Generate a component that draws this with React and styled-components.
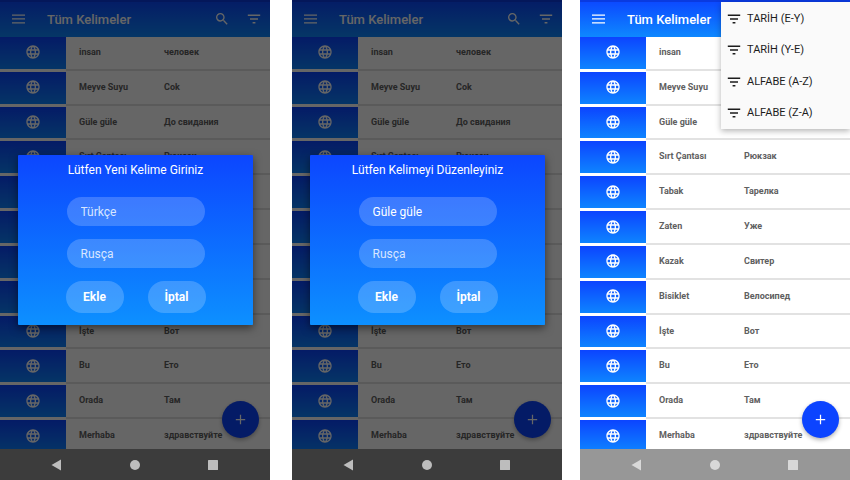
import React from "react";
import styled, { createGlobalStyle } from "styled-components";

const GlobalStyle = createGlobalStyle`
  *, *::before, *::after { box-sizing: border-box; }
  body {
    margin: 0;
    background: #fff;
    font-family: Roboto, "Noto Sans", sans-serif;
  }
`;

const Gallery = styled.main`
  display: flex;
  min-height: 100vh;
`;

const Phone = styled.section`
  position: relative;
  flex: 1;
  min-width: 0;
  display: flex;
  flex-direction: column;
  overflow: hidden;
  background: #fff;
  margin-left: ${(p) => p.$gap || 0}px;
`;

const AppBar = styled.header`
  display: flex;
  align-items: center;
  height: 37px;
  padding: 0 9px 2px 11px;
  border-top: 2px solid #0a3ae0;
  color: #fff;
  background: linear-gradient(#0c4aff, #0e88ff);
`;

const IconButton = styled.button`
  display: flex;
  margin: 0 0 0 ${(p) => p.$gap || 0}px;
  padding: 0;
  border: 0;
  color: inherit;
  background: none;
`;

const Title = styled.h1`
  flex: 1;
  margin: 0;
  padding: 2px 0 0 22px;
  font-size: 13px;
  line-height: 18px;
  font-weight: 500;
  white-space: nowrap;
`;

const ListArea = styled.div`
  flex: 1;
  display: flex;
  min-height: 0;
  overflow: hidden;
`;

const WordList = styled.ul`
  flex: 1;
  display: grid;
  grid-auto-rows: minmax(32px, 1fr);
  margin: 0 0 -6px;
  padding: 0;
  list-style: none;
`;

const WordRow = styled.li`
  display: grid;
  grid-template-columns: 66px 1fr;
  padding-bottom: 3px;
`;

const Tile = styled.div`
  display: grid;
  place-items: center;
  padding-bottom: 1px;
  color: #fff;
  background: linear-gradient(#0c44ff, #0e84ff);
`;

const Words = styled.div`
  display: grid;
  grid-template-columns: 85px 1fr;
  align-items: center;
  padding: 0 0 2px 13px;
  font-size: 9px;
  line-height: 12px;
  font-weight: 700;
  color: #606060;
  white-space: nowrap;
  background: #fff;
  box-shadow: 0 2px 0 #e2e2e2;
`;

const AddButton = styled.button`
  position: absolute;
  right: 11px;
  bottom: 42px;
  display: grid;
  place-items: center;
  width: 37px;
  height: 37px;
  padding: 0;
  border: 0;
  border-radius: 50%;
  color: #fff;
  background: #0c44ff;
  box-shadow: 0 2px 4px rgba(0, 0, 0, 0.3);
`;

const NavBar = styled.nav`
  position: relative;
  z-index: 2;
  display: flex;
  justify-content: space-between;
  align-items: center;
  height: 31px;
  padding: 0 52px 0 51px;
  color: ${(p) => (p.$dim ? "#bdbdbd" : "#d8d8d8")};
  background: ${(p) => (p.$dim ? "#3c3c3c" : "#979797")};
`;

const Scrim = styled.div`
  position: absolute;
  inset: 0;
  z-index: 1;
  display: grid;
  place-items: center;
  padding: 0 17px 0 18px;
  background: rgba(0, 0, 0, 0.6);
`;

const Dialog = styled.form`
  display: flex;
  flex-direction: column;
  align-items: center;
  width: 100%;
  padding: 7px 0 12px;
  border-radius: 1px;
  color: #fff;
  background: linear-gradient(#0c46ff, #0d90ff);
  box-shadow: 0 3px 8px rgba(0, 0, 0, 0.5);
`;

const DialogTitle = styled.h2`
  margin: 0 0 19px;
  font-size: 12px;
  line-height: 16px;
  font-weight: 400;
`;

const Field = styled.input`
  width: 138px;
  height: 29px;
  margin: 0 0 13px;
  padding: 0 14px;
  border: 0;
  border-radius: 15px;
  font-family: inherit;
  font-size: 12px;
  color: inherit;
  background: rgba(255, 255, 255, 0.2);

  &::placeholder {
    color: #d8e6ff;
    opacity: 1;
  }
`;

const Actions = styled.div`
  display: flex;
  gap: 24px;
`;

const ActionButton = styled.button`
  width: 58px;
  height: 32px;
  padding: 0;
  border: 0;
  border-radius: 16px;
  font-family: inherit;
  font-size: 12px;
  font-weight: 700;
  color: inherit;
  background: rgba(255, 255, 255, 0.2);
`;

const SortMenu = styled.div`
  position: absolute;
  top: 2px;
  right: 0;
  z-index: 1;
  display: grid;
  grid-auto-rows: 1fr;
  width: 129px;
  height: 127px;
  padding-top: 1px;
  color: #1c1c1c;
  background: #fafafa;
  box-shadow: 0 2px 6px rgba(0, 0, 0, 0.3);
`;

const SortItem = styled.button`
  display: flex;
  align-items: center;
  gap: 6px;
  padding: 0 6px;
  border: 0;
  font-family: inherit;
  font-size: 11px;
  line-height: 16px;
  color: inherit;
  background: none;
  white-space: nowrap;
`;

const MenuIcon = () => (
  <svg width="14" height="14" viewBox="0 0 14 14" fill="currentColor" aria-hidden="true">
    <path d="M1 2.4h13v1.3H1zM1 6.3h13v1.3H1zM1 10.2h13v1.3H1z" />
  </svg>
);

const SearchIcon = () => (
  <svg width="16" height="16" viewBox="0 0 24 24" fill="currentColor" aria-hidden="true">
    <path d="M15.5 14h-.79l-.28-.27A6.47 6.47 0 0 0 16 9.5 6.5 6.5 0 1 0 9.5 16c1.61 0 3.09-.59 4.23-1.57l.27.28v.79l5 4.99L20.49 19l-4.99-5zm-6 0C7.01 14 5 11.99 5 9.5S7.01 5 9.5 5 14 7.01 14 9.5 11.99 14 9.5 14z" />
  </svg>
);

const SortIcon = () => (
  <svg width="14" height="14" viewBox="0 0 14 14" fill="currentColor" aria-hidden="true">
    <path d="M.8 2.5h12.4v1.6H.8zM3 6.200h8v1.600H3zM5.600 9.900h2.800v1.500H5.600z" />
  </svg>
);

const GlobeIcon = () => (
  <svg width="16" height="16" viewBox="0 0 24 24" fill="currentColor" aria-hidden="true">
    <path d="M11.99 2C6.47 2 2 6.48 2 12s4.47 10 9.99 10C17.52 22 22 17.52 22 12S17.52 2 11.99 2zm6.93 6h-2.95a15.65 15.65 0 0 0-1.38-3.56A8.03 8.03 0 0 1 18.92 8zM12 4.04c.83 1.2 1.48 2.53 1.91 3.96h-3.82c.43-1.43 1.08-2.76 1.91-3.96zM4.26 14C4.1 13.36 4 12.69 4 12s.1-1.36.26-2h3.38c-.08.66-.14 1.32-.14 2s.06 1.34.14 2H4.26zm.82 2h2.95c.32 1.25.78 2.45 1.38 3.56A7.99 7.99 0 0 1 5.08 16zm2.95-8H5.08a7.99 7.99 0 0 1 4.33-3.56A15.65 15.65 0 0 0 8.03 8zM12 19.96c-.83-1.2-1.48-2.53-1.91-3.96h3.82c-.43 1.43-1.08 2.76-1.91 3.96zM14.34 14H9.66c-.09-.66-.16-1.32-.16-2s.07-1.35.16-2h4.68c.09.65.16 1.32.16 2s-.07 1.34-.16 2zm.25 5.56c.6-1.11 1.06-2.31 1.38-3.56h2.95a8.03 8.03 0 0 1-4.33 3.56zM16.36 14c.08-.66.14-1.32.14-2s-.06-1.34-.14-2h3.38c.16.64.26 1.31.26 2s-.1 1.36-.26 2h-3.38z" />
  </svg>
);

const PlusIcon = () => (
  <svg width="15" height="15" viewBox="0 0 24 24" fill="currentColor" aria-hidden="true">
    <path d="M19.500 13h-6.500v6.500h-2V13H4.500v-2H11V4.500h2V11h6.500z" />
  </svg>
);

const BackIcon = () => (
  <svg width="10" height="12" viewBox="0 0 10 12" fill="currentColor" aria-hidden="true">
    <path d="M.5 6L10 .5v11z" />
  </svg>
);

const HomeIcon = () => (
  <svg width="10" height="10" viewBox="0 0 10 10" fill="currentColor" aria-hidden="true">
    <circle cx="5" cy="5" r="5" />
  </svg>
);

const RecentIcon = () => (
  <svg width="10" height="10" viewBox="0 0 10 10" fill="currentColor" aria-hidden="true">
    <rect width="10" height="10" rx="0.5" />
  </svg>
);

const WORDS = [
  ["insan", "человек"],
  ["Meyve Suyu", "Cok"],
  ["Güle güle", "До свидания"],
  ["Sırt Çantası", "Рюкзак"],
  ["Tabak", "Тарелка"],
  ["Zaten", "Уже"],
  ["Kazak", "Свитер"],
  ["Bisiklet", "Велосипед"],
  ["İşte", "Вот"],
  ["Bu", "Ето"],
  ["Orada", "Там"],
  ["Merhaba", "здравствуйте"],
];

const SORTS = ["TARİH (E-Y)", "TARİH (Y-E)", "ALFABE (A-Z)", "ALFABE (Z-A)"];

function WordScreen({ gap, dim, children }) {
  return (
    <Phone $gap={gap}>
      <AppBar>
        <IconButton type="button" aria-label="Menü"><MenuIcon /></IconButton>
        <Title>Tüm Kelimeler</Title>
        <IconButton type="button" aria-label="Ara"><SearchIcon /></IconButton>
        <IconButton type="button" aria-label="Sırala" $gap={17}><SortIcon /></IconButton>
      </AppBar>
      <ListArea>
        <WordList>
          {WORDS.map(([tr, ru]) => (
            <WordRow key={tr}>
              <Tile><GlobeIcon /></Tile>
              <Words>
                <span>{tr}</span>
                <span lang="ru">{ru}</span>
              </Words>
            </WordRow>
          ))}
        </WordList>
      </ListArea>
      <AddButton type="button" aria-label="Yeni kelime"><PlusIcon /></AddButton>
      <NavBar $dim={dim}>
        <IconButton type="button" aria-label="Geri"><BackIcon /></IconButton>
        <IconButton type="button" aria-label="Ana ekran"><HomeIcon /></IconButton>
        <IconButton type="button" aria-label="Son uygulamalar"><RecentIcon /></IconButton>
      </NavBar>
      {children}
    </Phone>
  );
}

function WordDialog({ title, value }) {
  return (
    <Scrim>
      <Dialog role="dialog" aria-label={title} onSubmit={(e) => e.preventDefault()}>
        <DialogTitle>{title}</DialogTitle>
        <Field aria-label="Türkçe" placeholder="Türkçe" defaultValue={value} />
        <Field aria-label="Rusça" placeholder="Rusça" />
        <Actions>
          <ActionButton type="submit">Ekle</ActionButton>
          <ActionButton type="button">İptal</ActionButton>
        </Actions>
      </Dialog>
    </Scrim>
  );
}

export default function App() {
  return (
    <>
      <GlobalStyle />
      <Gallery>
        <WordScreen dim>
          <WordDialog title="Lütfen Yeni Kelime Giriniz" />
        </WordScreen>
        <WordScreen dim gap={22}>
          <WordDialog title="Lütfen Kelimeyi Düzenleyiniz" value="Güle güle" />
        </WordScreen>
        <WordScreen gap={18}>
          <SortMenu role="menu">
            {SORTS.map((label) => (
              <SortItem key={label} type="button" role="menuitem">
                <SortIcon />
                {label}
              </SortItem>
            ))}
          </SortMenu>
        </WordScreen>
      </Gallery>
    </>
  );
}
